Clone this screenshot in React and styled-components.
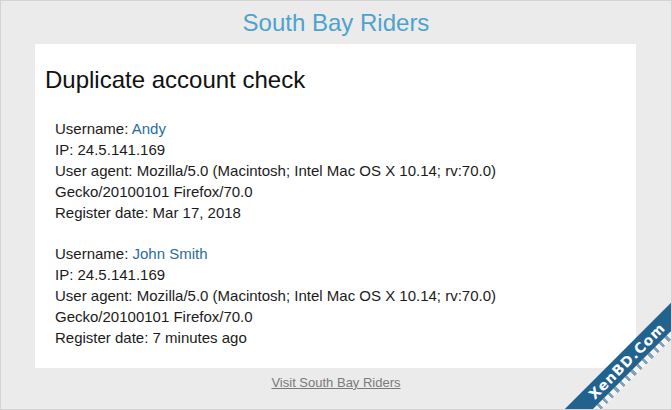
import styled, { createGlobalStyle } from "styled-components";

const GlobalStyle = createGlobalStyle`
  html, body {
    margin: 0;
    padding: 0;
    background: #ebebeb;
  }
`;

const Frame = styled.div`
  position: relative;
  width: 672px;
  height: 410px;
  box-sizing: border-box;
  border: 1px solid #d4d4d4;
  background: #ebebeb;
  overflow: hidden;
  font-family: "Liberation Sans", Arial, sans-serif;
  color: #161616;
`;

const SiteTitle = styled.div`
  height: 43px;
  line-height: 43px;
  text-align: center;
  font-size: 24px;
  color: #4ea3cb;
`;

const Card = styled.div`
  width: 601px;
  margin-left: 34px;
  box-sizing: border-box;
  background: #ffffff;
  padding: 22px 10px 20px;
`;

const Heading = styled.h2`
  margin: 0 0 23px;
  font-size: 24px;
  font-weight: 400;
  line-height: 28.8px;
  color: #111;
`;

const Account = styled.div`
  margin-left: 10px;
  font-size: 15px;
  line-height: 21px;
  color: #1b1b1b;

  & + & {
    margin-top: 20px;
  }
`;

const UserLink = styled.a`
  color: #2a6e9b;
  text-decoration: none;
`;

const Footer = styled.div`
  height: 30px;
  line-height: 30px;
  text-align: center;
  font-size: 13px;
`;

const FooterLink = styled.a`
  color: #7a7a7a;
  text-decoration: underline;
`;

const Ribbon = styled.div`
  position: absolute;
  left: 496px;
  top: 350px;
  width: 260px;
  transform-origin: 130px 10px;
  transform: rotate(-45deg);
  display: flex;
  flex-direction: column;
`;

const RibbonBand = styled.div`
  height: 20px;
  background: #22628f;
  color: #fff;
  display: flex;
  align-items: center;
  justify-content: center;
  font-family: "DejaVu Sans", Verdana, sans-serif;
  font-weight: 700;
  font-size: 14px;
  letter-spacing: 1px;
`;

const RibbonStripe = styled.div`
  height: 6px;
  background: repeating-linear-gradient(
    90deg,
    #f4f6f8 0 5px,
    #6f8fa8 5px 8px
  );
  opacity: 0.8;
`;

const accounts = [
  {
    name: "Andy",
    ip: "24.5.141.169",
    agent: "Mozilla/5.0 (Macintosh; Intel Mac OS X 10.14; rv:70.0)",
    agentTail: "Gecko/20100101 Firefox/70.0",
    registered: "Mar 17, 2018",
  },
  {
    name: "John Smith",
    ip: "24.5.141.169",
    agent: "Mozilla/5.0 (Macintosh; Intel Mac OS X 10.14; rv:70.0)",
    agentTail: "Gecko/20100101 Firefox/70.0",
    registered: "7 minutes ago",
  },
];

export default function App() {
  return (
    <>
      <GlobalStyle />
      <Frame>
        <SiteTitle>South Bay Riders</SiteTitle>
        <Card>
          <Heading>Duplicate account check</Heading>
          {accounts.map((acc) => (
            <Account key={acc.name}>
              <div>
                Username: <UserLink href="#">{acc.name}</UserLink>
              </div>
              <div>IP: {acc.ip}</div>
              <div>User agent: {acc.agent}</div>
              <div>{acc.agentTail}</div>
              <div>Register date: {acc.registered}</div>
            </Account>
          ))}
        </Card>
        <Footer>
          <FooterLink href="#">Visit South Bay Riders</FooterLink>
        </Footer>
        <Ribbon>
          <RibbonBand>XenBD.Com</RibbonBand>
          <RibbonStripe />
        </Ribbon>
      </Frame>
    </>
  );
}
